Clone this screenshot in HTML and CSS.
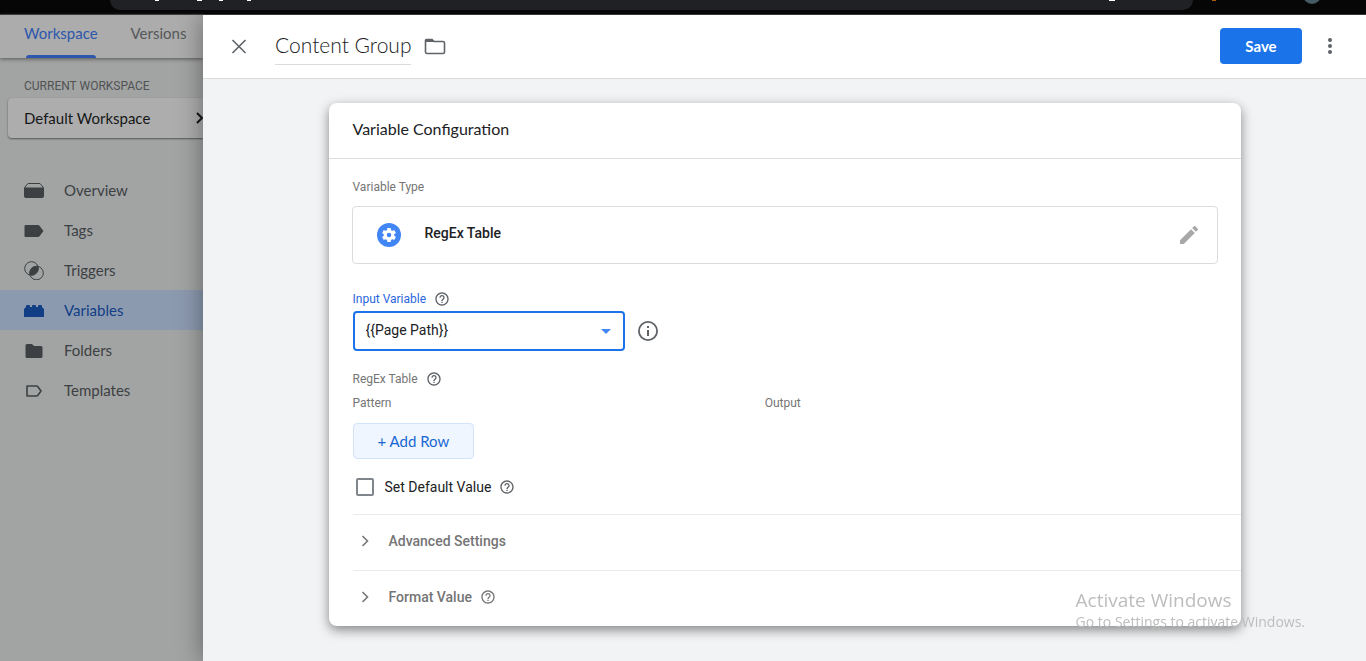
FILE: index.html
```html
<!DOCTYPE html>
<html lang="en">
<head>
<meta charset="utf-8">
<title>Content Group - Variable Configuration</title>
<link rel="stylesheet" href="styles.css">
</head>
<body>
<svg class="symbols" aria-hidden="true">
  <symbol id="help" viewBox="0 0 24 24"><path d="M11 18h2v-2h-2v2zm1-16C6.480 2 2 6.480 2 12s4.480 10 10 10 10-4.480 10-10S17.520 2 12 2zm0 18c-4.410 0-8-3.590-8-8s3.590-8 8-8 8 3.590 8 8-3.590 8-8 8zm0-14c-2.210 0-4 1.790-4 4h2c0-1.100.9-2 2-2s2 .9 2 2c0 2-3 1.750-3 5h2c0-2.250 3-2.500 3-5 0-2.210-1.790-4-4-4z"/></symbol>
  <symbol id="chevron" viewBox="0 0 24 24"><path d="M9.500 7l5 5-5 5" fill="none" stroke="currentColor" stroke-width="1.600"/></symbol>
</svg>
<div class="browser-bar" aria-hidden="true">
  <div class="address">
    <svg class="address-marks" width="150" height="2"><path d="M45 0h4M87 0h5M109 0h4M137 0h4" stroke="#fff" stroke-width="2"/></svg>
    <svg class="address-action" width="8" height="2"><path d="M1 0h6" stroke="#fff" stroke-width="2"/></svg>
  </div>
  <span class="extension"></span>
  <svg width="18" height="4" viewBox="0 0 18 4"><circle cx="9" cy="-5" r="9" fill="#455a64"/></svg>
</div>
<div class="app">
  <aside class="sidebar">
    <nav class="tabs">
      <a class="tab tab-active" href="#workspace">Workspace</a>
      <a class="tab" href="#versions">Versions</a>
    </nav>
    <p class="workspace-label">CURRENT WORKSPACE</p>
    <button class="workspace" type="button">Default Workspace
      <svg class="icon" width="20" height="20" viewBox="0 0 20 20"><path d="M6 5l5 5-5 5" fill="none" stroke="currentColor" stroke-width="2"/></svg>
    </button>
    <nav class="menu">
      <a class="menu-item" href="#overview"><svg class="icon" width="20" height="20" viewBox="0 0 20 20"><path d="M1 7L4 3.500h12L19 7v10H1z" fill="none" stroke="currentColor" stroke-linejoin="round"/><path d="M0 7.500h20V16q0 2-2 2H2q-2 0-2-2z"/></svg>Overview</a>
      <a class="menu-item" href="#tags"><svg class="icon" width="20" height="20" viewBox="0 0 20 20"><path d="M1 5h13q1 0 1.500.7L19.500 11l-4 5.300q-.5.700-1.500.7H1.500Q.5 17 .5 16V6q0-1 1-1z"/></svg>Tags</a>
      <a class="menu-item" href="#triggers"><svg class="icon" width="20" height="20" viewBox="0 0 20 20"><g fill="none" stroke="currentColor" stroke-width="1"><circle cx="7.500" cy="8.500" r="6.800"/><circle cx="12.500" cy="13" r="6.800"/></g><path d="M14.200 6.500a6.800 6.800 0 0 1-8.300 8.400 6.800 6.800 0 0 1 8.300-8.400z"/></svg>Triggers</a>
      <a class="menu-item menu-item-active" href="#variables"><svg class="icon" width="20" height="20" viewBox="0 0 20 20"><path d="M0 9l2-2V6q0-1 1-1h2q1 0 1 1v1h2V6q0-1 1-1h2q1 0 1 1v1h2V6q0-1 1-1h2q1 0 1 1v1l2 2v8H0z"/></svg>Variables</a>
      <a class="menu-item" href="#folders"><svg class="icon" width="20" height="20" viewBox="0 0 20 20"><path d="M3 4h5l2 2h7q1.500 0 1.500 1.500v9q0 1.500-1.500 1.500H3q-1.500 0-1.500-1.500v-11Q1.500 4 3 4z"/></svg>Folders</a>
      <a class="menu-item" href="#templates"><svg class="icon" width="20" height="20" viewBox="0 0 20 20"><path d="M3 6h9.500q.8 0 1.200.6L17 11l-3.300 4.400q-.4.600-1.200.6H3z" fill="none" stroke="currentColor" stroke-width="1.600" stroke-linejoin="round"/></svg>Templates</a>
    </nav>
  </aside>
  <main class="sheet">
    <header class="sheet-header">
      <button class="icon-button" type="button" aria-label="Close"><svg class="icon" width="24" height="24" viewBox="0 0 24 24"><path d="M5.500 6l13 13M18.500 6l-13 13" stroke="currentColor" stroke-width="1.600"/></svg></button>
      <h1 class="title">Content Group</h1>
      <button class="icon-button" type="button" aria-label="Move to folder"><svg class="icon" width="24" height="24" viewBox="0 0 24 24"><path d="M3.500 5.500H9l2 2h9q1.500 0 1.500 1.500v9q0 1.500-1.500 1.500H4Q2.500 19.500 2.500 18V6.500q0-1 1-1z" fill="none" stroke="currentColor" stroke-width="1.600"/><path d="M3 5h6l3 3H2.500z"/></svg></button>
      <button class="save" type="button">Save</button>
      <button class="icon-button more" type="button" aria-label="More"><svg class="icon" width="24" height="24" viewBox="0 0 24 24"><circle cx="12" cy="6" r="2"/><circle cx="12" cy="12" r="2"/><circle cx="12" cy="18" r="2"/></svg></button>
    </header>
    <section class="card">
      <h2 class="card-title">Variable Configuration</h2>
      <div class="card-body">
        <p class="label">Variable Type</p>
        <div class="type">
          <svg width="24" height="24" viewBox="0 0 24 24"><circle cx="12" cy="12" r="12" fill="#4285f4"/><g transform="translate(3.600 3.600) scale(.7)"><path fill="#fff" d="M19.430 12.980c.04-.32.070-.64.070-.98s-.03-.66-.07-.98l2.110-1.650c.19-.15.240-.42.120-.64l-2-3.460c-.12-.22-.39-.3-.61-.22l-2.490 1c-.52-.4-1.080-.73-1.690-.98l-.38-2.650C14.460 2.180 14.250 2 14 2h-4c-.25 0-.46.180-.49.420l-.38 2.650c-.61.250-1.170.590-1.690.98l-2.490-1c-.23-.09-.49 0-.61.220l-2 3.460c-.13.220-.07.490.120.640l2.110 1.650c-.04.320-.07.650-.07.980s.03.660.070.980l-2.110 1.650c-.19.150-.24.420-.12.640l2 3.460c.12.220.39.300.61.220l2.490-1c.52.400 1.080.730 1.690.98l.38 2.650c.03.240.240.420.49.420h4c.25 0 .46-.18.490-.42l.38-2.650c.61-.25 1.170-.59 1.690-.98l2.490 1c.23.090.49 0 .61-.22l2-3.460c.12-.22.070-.49-.12-.64l-2.110-1.650z"/><circle cx="12" cy="12" r="3.200" fill="#4285f4"/></g></svg>
          <span class="type-name">RegEx Table</span>
          <button class="icon-button edit" type="button" aria-label="Edit type"><svg class="icon" width="24" height="24" viewBox="0 0 24 24"><path d="M3 17.250V21h3.750L17.810 9.940l-3.750-3.750L3 17.250zM20.710 7.040a1 1 0 0 0 0-1.410l-2.340-2.340a1 1 0 0 0-1.410 0l-1.830 1.830 3.750 3.750 1.830-1.830z"/></svg></button>
        </div>
        <div class="label-row input-label">
          <label for="input-variable">Input Variable</label>
          <svg class="icon help" width="16" height="16"><use href="#help"/></svg>
        </div>
        <div class="select-row">
          <div class="select-box">
            <select id="input-variable"><option>{{Page Path}}</option></select>
            <span class="arrow"></span>
          </div>
          <svg class="icon" width="24" height="24" viewBox="0 0 24 24"><path d="M11 7h2v2h-2zm0 4h2v6h-2zm1-9a10 10 0 1 0 0 20 10 10 0 0 0 0-20zm0 18.200a8.200 8.200 0 1 1 0-16.400 8.200 8.200 0 0 1 0 16.400z"/></svg>
        </div>
        <div class="label-row table-label">
          <span>RegEx Table</span>
          <svg class="icon help" width="16" height="16"><use href="#help"/></svg>
        </div>
        <table class="regex">
          <thead><tr><th class="pattern">Pattern</th><th>Output</th></tr></thead>
        </table>
        <button class="add-row" type="button">+ Add Row</button>
        <div class="default-row">
          <input class="checkbox" type="checkbox" id="default-value">
          <label for="default-value">Set Default Value</label>
          <svg class="icon help" width="16" height="16"><use href="#help"/></svg>
        </div>
      </div>
      <button class="expander" type="button"><svg class="icon" width="24" height="24"><use href="#chevron"/></svg><span>Advanced Settings</span></button>
      <button class="expander" type="button"><svg class="icon" width="24" height="24"><use href="#chevron"/></svg><span>Format Value</span><svg class="icon" width="16" height="16"><use href="#help"/></svg></button>
    </section>
  </main>
</div>
<div class="watermark">
  <p class="watermark-title">Activate Windows</p>
  <p class="watermark-text">Go to Settings to activate Windows.</p>
</div>
</body>
</html>
```

FILE: styles.css
```css
* { box-sizing: border-box; }

body {
  margin: 0;
  min-height: 100vh;
  display: flex;
  flex-direction: column;
  overflow: hidden;
  background: #f1f3f4;
  color: #202124;
  font: 14px/20px Roboto, "Liberation Sans", sans-serif;
}

h1, h2, p { margin: 0; font-weight: 400; }
a { text-decoration: none; color: inherit; }
button { border: 0; padding: 0; background: none; color: inherit; font: inherit; cursor: pointer; }
svg { flex: none; }
.icon { fill: currentColor; display: block; }
.symbols { display: none; }

.browser-bar {
  display: flex;
  height: 15px;
  padding: 0 45px 0 110px;
  background: #060606;
  border-bottom: 1px solid #353638;
}
.address {
  flex: 1;
  display: flex;
  justify-content: space-between;
  height: 10px;
  padding-right: 77px;
  background: #202124;
  border-radius: 0 0 14px 14px;
}
.extension { width: 4px; height: 1px; margin: 0 87px 0 19px; background: #b06000; }

.app { flex: 1; display: flex; }

.sidebar {
  width: 203px;
  flex: none;
  background: #a2a4a3;
  color: #3c4043;
  font-family: Lato, sans-serif;
  font-size: 15px;
  white-space: nowrap;
}
.tabs {
  display: flex;
  gap: 33px;
  height: 43px;
  padding-left: 24px;
  background: #acacac;
  box-shadow: 0 1px 4px #555;
  color: #555759;
}
.tab { display: flex; flex-direction: column; justify-content: space-between; padding-top: 8px; }
.tab-active { color: #2c57ac; }
.tab-active::after { content: ""; height: 3px; margin: 0 2px; background: #2c57ac; border-radius: 3px 3px 0 0; }

.workspace-label {
  margin: 20px 0 4px 24px;
  font: 12px/16px Roboto, sans-serif;
  color: #505254;
}
.workspace {
  display: flex;
  justify-content: space-between;
  align-items: center;
  width: 195px;
  height: 40px;
  margin-left: 8px;
  padding-left: 16px;
  background: #adadad;
  border-radius: 4px 0 0 4px;
  box-shadow: 0 1px 2px #555;
  color: #161718;
}
.workspace .icon { margin-right: -8px; }
.menu { margin-top: 32px; }
.menu-item { display: flex; align-items: center; gap: 20px; height: 40px; padding-left: 24px; }
.menu-item-active { background: #8c9ab0; color: #123e86; }

.sheet {
  flex: 1;
  min-width: 0;
  position: relative;
  background: #f1f3f4;
  box-shadow: 0 0 24px rgba(0, 0, 0, .4);
  clip-path: inset(0 0 0 -40px);
}
.sheet-header {
  display: flex;
  align-items: center;
  height: 64px;
  padding: 0 24px 2px;
  background: #fff;
  border-bottom: 1px solid #dadce0;
  color: #5f6368;
}
.title {
  margin: 4px 12px 0 24px;
  padding-bottom: 4px;
  border-bottom: 1px solid #dadce0;
  font: 300 21px/30px Lato, sans-serif;
  color: #202124;
}
.save {
  min-width: 82px;
  height: 36px;
  margin-left: auto;
  background: #1a73e8;
  border-radius: 4px;
  color: #fff;
  font: bold 15px/20px Lato, sans-serif;
}
.more { margin-left: 16px; }
.edit { margin-left: auto; color: #a8a8a8; }

.card {
  max-width: 912px;
  margin: 24px auto 34px;
  background: #fff;
  border-radius: 8px;
  box-shadow: 0 4px 12px rgba(0, 0, 0, .45);
}
.card-title {
  height: 56px;
  padding: 16px 24px;
  border-bottom: 1px solid #dadce0;
  font: 16px/20px Lato, sans-serif;
}
.card-body { padding: 20px 24px 0; }
.label, .label-row, .regex { font-size: 12px; line-height: 16px; color: #757575; }
.label-row { display: flex; align-items: center; gap: 8px; }
.help { color: #5f6368; }

.type {
  display: flex;
  align-items: center;
  gap: 24px;
  height: 58px;
  margin: 11px -1px 0;
  padding: 0 16px 0 24px;
  border: 1px solid #dadce0;
  border-radius: 4px;
}
.type-name { padding-bottom: 4px; font-weight: 500; }

.input-label { margin-top: 27px; color: #2a67dc; }
.select-row { display: flex; align-items: center; gap: 11px; margin-top: 4px; color: #5f6368; }
.select-box { position: relative; width: 272px; }
.select-box select {
  width: 100%;
  height: 40px;
  padding: 0 11px 2px;
  appearance: none;
  background: #fff;
  border: 2px solid #1a73e8;
  border-radius: 4px;
  font: inherit;
  color: #202124;
}
.arrow {
  position: absolute;
  right: 14px;
  top: 18px;
  border: 5px solid transparent;
  border-top-color: #4285f4;
  border-bottom: 0;
  pointer-events: none;
}

.table-label { margin-top: 20px; }
.regex { width: 100%; margin-top: 8px; border-collapse: collapse; table-layout: fixed; }
.regex th { padding: 0; text-align: left; font-weight: 400; }
.pattern { width: 47.7%; }
.add-row {
  display: block;
  height: 36px;
  margin-top: 12px;
  padding: 0 24px;
  background: #f0f6ff;
  border: 1px solid #d2e3fc;
  border-radius: 4px;
  color: #1967d2;
  font: 15px/20px Lato, sans-serif;
}
.default-row { display: flex; align-items: center; gap: 8px; height: 55px; }
.checkbox {
  width: 18px;
  height: 18px;
  margin: 0 3px;
  appearance: none;
  border: 2px solid #80868b;
  border-radius: 2px;
}

.expander {
  display: flex;
  align-items: center;
  gap: 8px;
  width: calc(100% - 24px);
  height: 56px;
  margin-left: 24px;
  padding-bottom: 3px;
  border-top: 1px solid #e8eaed;
  color: #757575;
  font-weight: 500;
}
.expander > .icon:first-child { margin-right: 4px; }

.watermark {
  position: fixed;
  right: 61px;
  bottom: 29px;
  color: #bdbdbd;
  font-family: "Open Sans", sans-serif;
  pointer-events: none;
}
.watermark-title { font-size: 19px; line-height: 24px; }
.watermark-text { font-size: 14px; line-height: 20px; }
```
